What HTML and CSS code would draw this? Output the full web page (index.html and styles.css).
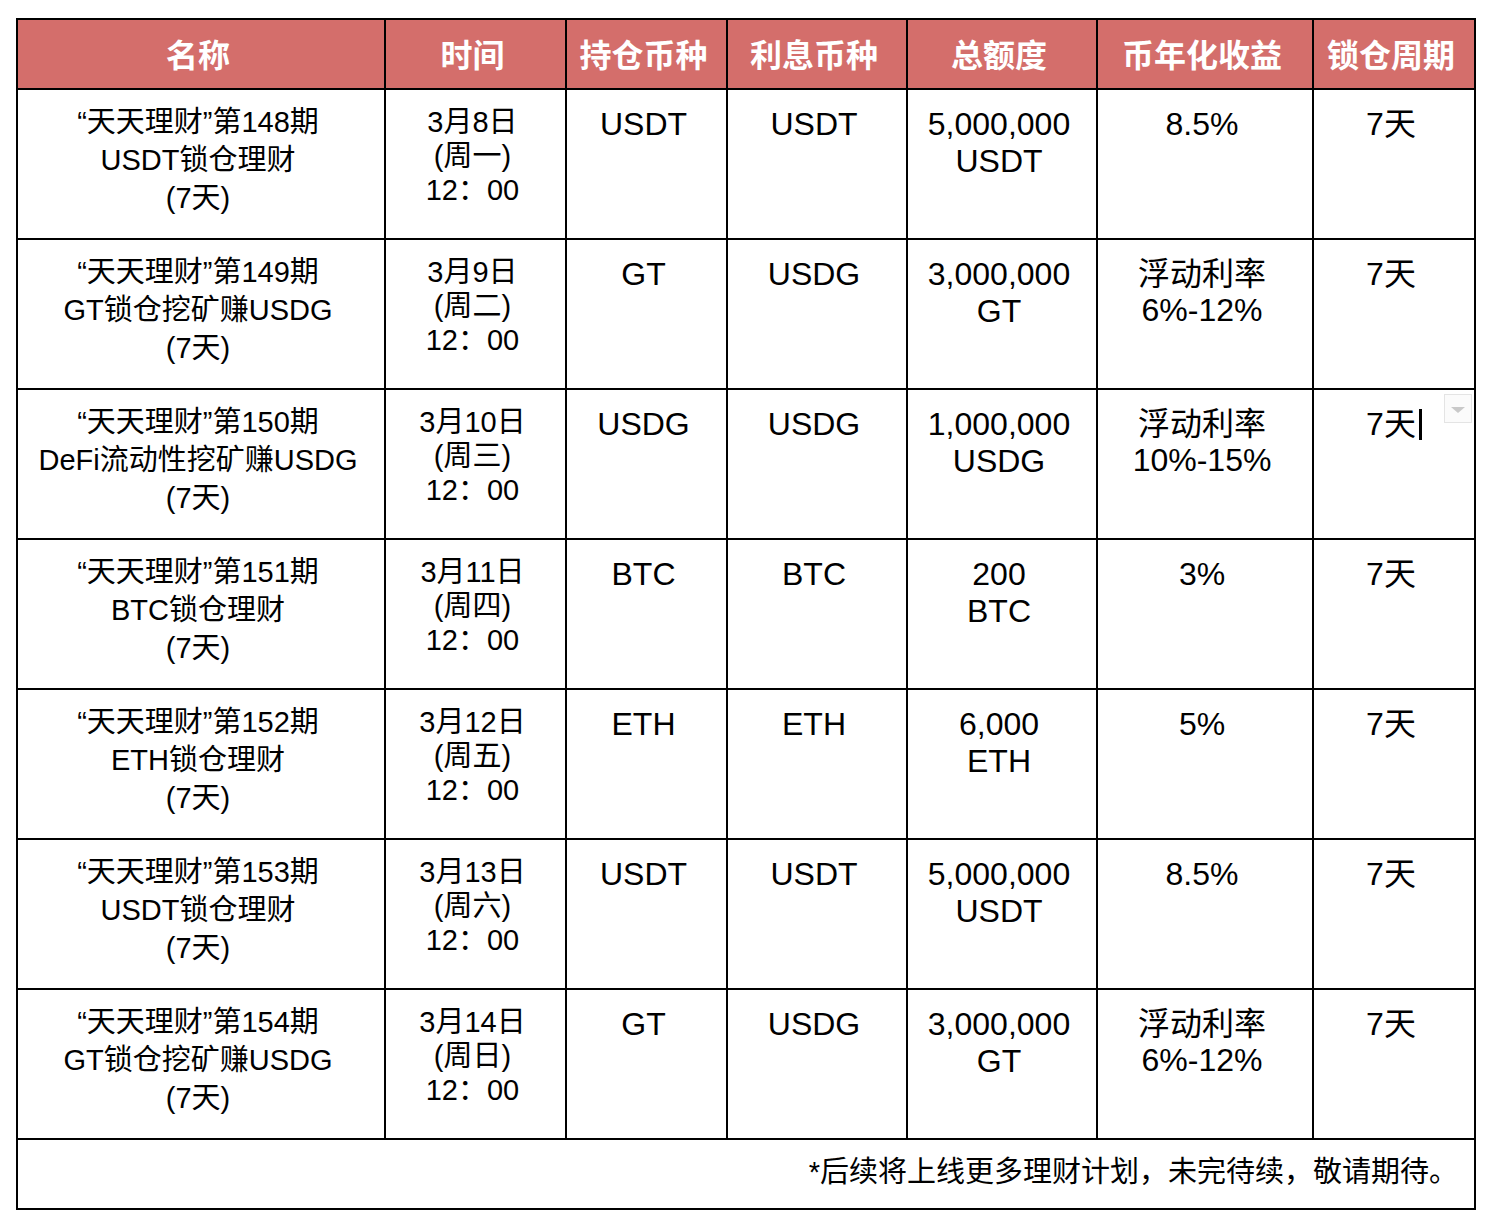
FILE: index.html
```html
<!DOCTYPE html>
<html lang="zh-CN">
<head>
<meta charset="utf-8">
<title>天天理财</title>
<link rel="stylesheet" href="styles.css">
</head>
<body>
<div class="sheet">
  <div class="hd">名称</div>
  <div class="hd">时间</div>
  <div class="hd">持仓币种</div>
  <div class="hd">利息币种</div>
  <div class="hd">总额度</div>
  <div class="hd">币年化收益</div>
  <div class="hd">锁仓周期</div>

  <div class="c name">“天天理财”第148期<br>USDT锁仓理财<br>(7天)</div>
  <div class="c date">3月8日<br>(周一)<br>12：00</div>
  <div class="c val">USDT</div>
  <div class="c val">USDT</div>
  <div class="c val amt">5,000,000<br>USDT</div>
  <div class="c val yld">8.5%</div>
  <div class="c val">7天</div>

  <div class="c name">“天天理财”第149期<br>GT锁仓挖矿赚USDG<br>(7天)</div>
  <div class="c date">3月9日<br>(周二)<br>12：00</div>
  <div class="c val">GT</div>
  <div class="c val">USDG</div>
  <div class="c val amt">3,000,000<br>GT</div>
  <div class="c val yld">浮动利率<br>6%-12%</div>
  <div class="c val">7天</div>

  <div class="c name">“天天理财”第150期<br>DeFi流动性挖矿赚USDG<br>(7天)</div>
  <div class="c date">3月10日<br>(周三)<br>12：00</div>
  <div class="c val">USDG</div>
  <div class="c val">USDG</div>
  <div class="c val amt">1,000,000<br>USDG</div>
  <div class="c val yld">浮动利率<br>10%-15%</div>
  <div class="c val active">7天<span class="caret"></span><span class="dropdown"><span class="tri"></span></span></div>

  <div class="c name">“天天理财”第151期<br>BTC锁仓理财<br>(7天)</div>
  <div class="c date">3月11日<br>(周四)<br>12：00</div>
  <div class="c val">BTC</div>
  <div class="c val">BTC</div>
  <div class="c val amt">200<br>BTC</div>
  <div class="c val yld">3%</div>
  <div class="c val">7天</div>

  <div class="c name">“天天理财”第152期<br>ETH锁仓理财<br>(7天)</div>
  <div class="c date">3月12日<br>(周五)<br>12：00</div>
  <div class="c val">ETH</div>
  <div class="c val">ETH</div>
  <div class="c val amt">6,000<br>ETH</div>
  <div class="c val yld">5%</div>
  <div class="c val">7天</div>

  <div class="c name">“天天理财”第153期<br>USDT锁仓理财<br>(7天)</div>
  <div class="c date">3月13日<br>(周六)<br>12：00</div>
  <div class="c val">USDT</div>
  <div class="c val">USDT</div>
  <div class="c val amt">5,000,000<br>USDT</div>
  <div class="c val yld">8.5%</div>
  <div class="c val">7天</div>

  <div class="c name">“天天理财”第154期<br>GT锁仓挖矿赚USDG<br>(7天)</div>
  <div class="c date">3月14日<br>(周日)<br>12：00</div>
  <div class="c val">GT</div>
  <div class="c val">USDG</div>
  <div class="c val amt">3,000,000<br>GT</div>
  <div class="c val yld">浮动利率<br>6%-12%</div>
  <div class="c val">7天</div>

  <div class="foot">*后续将上线更多理财计划，未完待续，敬请期待。</div>
</div>
</body>
</html>
```

FILE: styles.css
```css
html, body {
  margin: 0;
  padding: 0;
  background: #ffffff;
}

body {
  font-family: "Liberation Sans", "Noto Sans CJK SC", sans-serif;
  color: #000000;
}

.sheet {
  margin: 18px 0 0 16px;
  width: 1460px;
  box-sizing: border-box;
  display: grid;
  grid-template-columns: 368px 181px 161px 180px 190px 216px 162px;
  grid-template-rows: 70px repeat(7, 150px) 70px;
  border-left: 2px solid #000;
  border-top: 2px solid #000;
}

.sheet > div {
  box-sizing: border-box;
  border-right: 2px solid #000;
  border-bottom: 2px solid #000;
}

.hd {
  background: #d46e6b;
  color: #ffffff;
  font-family: "Noto Sans CJK SC", sans-serif;
  font-weight: 700;
  font-size: 32px;
  display: flex;
  align-items: center;
  justify-content: center;
  padding-bottom: 3px;
  padding-right: 6px;
  white-space: nowrap;
}

.c {
  text-align: center;
  white-space: nowrap;
  padding-right: 6px;
}

.name {
  font-size: 29px;
  line-height: 38px;
  padding-top: 13px;
}

.date {
  font-size: 29px;
  line-height: 34px;
  padding-top: 15px;
}

.val {
  font-size: 32px;
  line-height: 37px;
  padding-top: 16px;
}

.yld {
  line-height: 36px;
}

.active {
  position: relative;
}

.caret {
  display: inline-block;
  width: 3px;
  height: 31px;
  background: #000;
  margin-left: 3px;
  margin-right: -6px;
  vertical-align: -5px;
}

.dropdown {
  position: absolute;
  top: 4px;
  right: 2px;
  width: 28px;
  height: 29px;
  box-sizing: border-box;
  border: 1px solid #e4e4e4;
  background: #fbfbfb;
  display: flex;
  align-items: center;
  justify-content: center;
}

.tri {
  width: 0;
  height: 0;
  border-left: 7px solid transparent;
  border-right: 7px solid transparent;
  border-top: 6px solid #c9c9c9;
  margin-top: 2px;
}

.foot {
  grid-column: 1 / -1;
  display: flex;
  align-items: center;
  justify-content: flex-end;
  padding-right: 16px;
  padding-bottom: 10px;
  font-size: 29px;
  white-space: nowrap;
}
```
